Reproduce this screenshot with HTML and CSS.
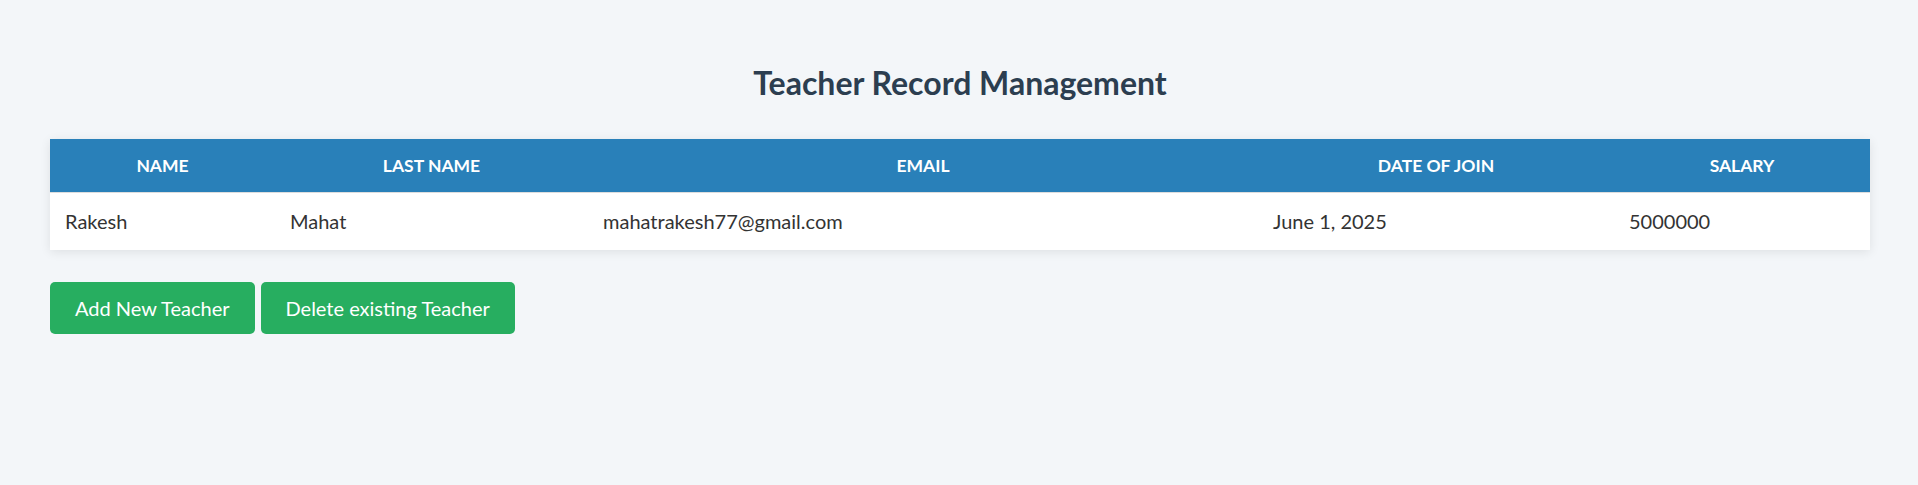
FILE: index.html
```html
<!DOCTYPE html>
<html lang="en">
<head>
<meta charset="utf-8">
<title>Teacher Record Management</title>
<link rel="stylesheet" href="styles.css">
</head>
<body>
<main class="page">
  <h1 class="title">Teacher Record Management</h1>
  <table class="records">
    <colgroup>
      <col class="c-name">
      <col class="c-last">
      <col class="c-email">
      <col class="c-date">
      <col class="c-salary">
    </colgroup>
    <thead>
      <tr>
        <th>Name</th>
        <th>Last Name</th>
        <th>Email</th>
        <th>Date of Join</th>
        <th>Salary</th>
      </tr>
    </thead>
    <tbody>
      <tr>
        <td>Rakesh</td>
        <td>Mahat</td>
        <td>mahatrakesh77@gmail.com</td>
        <td>June 1, 2025</td>
        <td>5000000</td>
      </tr>
    </tbody>
  </table>
  <div class="actions">
    <button class="btn" type="button">Add New Teacher</button>
    <button class="btn" type="button">Delete existing Teacher</button>
  </div>
</main>
</body>
</html>
```
FILE: styles.css
```css
html, body {
  margin: 0;
  padding: 0;
}

body {
  background: #f3f6f9;
  font-family: Lato, "Open Sans", "Noto Sans", sans-serif;
  color: #333333;
}

.page {
  padding: 64px 48px 0 50px;
}

.title {
  margin: 0 0 37px;
  text-align: center;
  font-size: 32px;
  line-height: 38px;
  font-weight: 700;
  color: #2c3e50;
}

.records {
  width: 100%;
  table-layout: fixed;
  border-collapse: collapse;
  background: #ffffff;
  box-shadow: 0 2px 10px rgba(0, 0, 0, 0.09);
}

.c-name { width: 225px; }
.c-last { width: 313px; }
.c-email { width: 670px; }
.c-date { width: 356px; }
.c-salary { width: 256px; }

.records th {
  background: #2980b9;
  color: #ffffff;
  font-size: 17.5px;
  line-height: 21px;
  font-weight: 700;
  text-transform: uppercase;
  text-align: center;
  padding: 16px 15px;
  border-bottom: 1px solid #dddddd;
}

.records td {
  font-size: 20px;
  line-height: 25px;
  padding: 16px 15px;
  text-align: left;
  color: #333333;
}

.actions {
  display: flex;
  gap: 6px;
  margin-top: 32px;
}

.btn {
  font-family: inherit;
  font-size: 20px;
  line-height: 28px;
  padding: 12px 25px;
  border: none;
  border-radius: 5px;
  background: #27ae60;
  color: #ffffff;
  cursor: pointer;
}
```
